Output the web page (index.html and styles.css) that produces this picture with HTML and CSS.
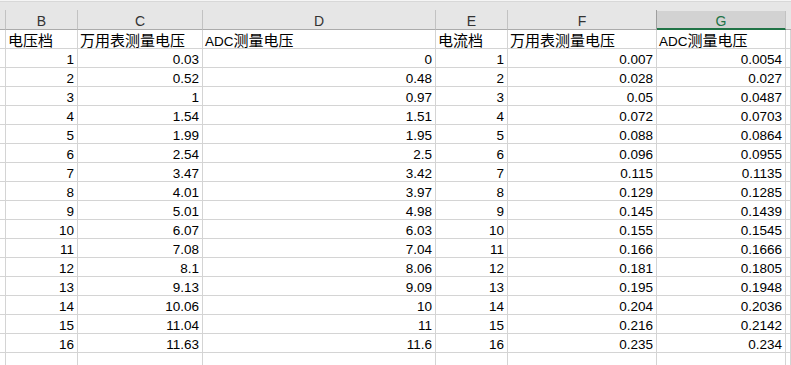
FILE: index.html
```html
<!DOCTYPE html>
<html lang="zh">
<head>
<meta charset="utf-8">
<title>Sheet</title>
<link rel="stylesheet" href="styles.css">
</head>
<body>
<div class="sheet">
  <div class="colhead">
    <div class="ch"></div>
    <div class="ch">B</div>
    <div class="ch">C</div>
    <div class="ch">D</div>
    <div class="ch">E</div>
    <div class="ch pre-sel">F</div>
    <div class="ch sel">G</div>
    <div class="ch last"></div>
  </div>
  <div class="grid">
    <div class="c"></div><div class="c t"><span class="cjk">电压档</span></div><div class="c t"><span class="cjk">万用表测量电压</span></div><div class="c t">ADC<span class="cjk">测量电压</span></div><div class="c t"><span class="cjk">电流档</span></div><div class="c t"><span class="cjk">万用表测量电压</span></div><div class="c t">ADC<span class="cjk">测量电压</span></div><div class="c"></div>
    <div class="c"></div><div class="c n">1</div><div class="c n">0.03</div><div class="c n">0</div><div class="c n">1</div><div class="c n">0.007</div><div class="c n">0.0054</div><div class="c"></div>
    <div class="c"></div><div class="c n">2</div><div class="c n">0.52</div><div class="c n">0.48</div><div class="c n">2</div><div class="c n">0.028</div><div class="c n">0.027</div><div class="c"></div>
    <div class="c"></div><div class="c n">3</div><div class="c n">1</div><div class="c n">0.97</div><div class="c n">3</div><div class="c n">0.05</div><div class="c n">0.0487</div><div class="c"></div>
    <div class="c"></div><div class="c n">4</div><div class="c n">1.54</div><div class="c n">1.51</div><div class="c n">4</div><div class="c n">0.072</div><div class="c n">0.0703</div><div class="c"></div>
    <div class="c"></div><div class="c n">5</div><div class="c n">1.99</div><div class="c n">1.95</div><div class="c n">5</div><div class="c n">0.088</div><div class="c n">0.0864</div><div class="c"></div>
    <div class="c"></div><div class="c n">6</div><div class="c n">2.54</div><div class="c n">2.5</div><div class="c n">6</div><div class="c n">0.096</div><div class="c n">0.0955</div><div class="c"></div>
    <div class="c"></div><div class="c n">7</div><div class="c n">3.47</div><div class="c n">3.42</div><div class="c n">7</div><div class="c n">0.115</div><div class="c n">0.1135</div><div class="c"></div>
    <div class="c"></div><div class="c n">8</div><div class="c n">4.01</div><div class="c n">3.97</div><div class="c n">8</div><div class="c n">0.129</div><div class="c n">0.1285</div><div class="c"></div>
    <div class="c"></div><div class="c n">9</div><div class="c n">5.01</div><div class="c n">4.98</div><div class="c n">9</div><div class="c n">0.145</div><div class="c n">0.1439</div><div class="c"></div>
    <div class="c"></div><div class="c n">10</div><div class="c n">6.07</div><div class="c n">6.03</div><div class="c n">10</div><div class="c n">0.155</div><div class="c n">0.1545</div><div class="c"></div>
    <div class="c"></div><div class="c n">11</div><div class="c n">7.08</div><div class="c n">7.04</div><div class="c n">11</div><div class="c n">0.166</div><div class="c n">0.1666</div><div class="c"></div>
    <div class="c"></div><div class="c n">12</div><div class="c n">8.1</div><div class="c n">8.06</div><div class="c n">12</div><div class="c n">0.181</div><div class="c n">0.1805</div><div class="c"></div>
    <div class="c"></div><div class="c n">13</div><div class="c n">9.13</div><div class="c n">9.09</div><div class="c n">13</div><div class="c n">0.195</div><div class="c n">0.1948</div><div class="c"></div>
    <div class="c"></div><div class="c n">14</div><div class="c n">10.06</div><div class="c n">10</div><div class="c n">14</div><div class="c n">0.204</div><div class="c n">0.2036</div><div class="c"></div>
    <div class="c"></div><div class="c n">15</div><div class="c n">11.04</div><div class="c n">11</div><div class="c n">15</div><div class="c n">0.216</div><div class="c n">0.2142</div><div class="c"></div>
    <div class="c"></div><div class="c n">16</div><div class="c n">11.63</div><div class="c n">11.6</div><div class="c n">16</div><div class="c n">0.235</div><div class="c n">0.234</div><div class="c"></div>
    <div class="c"></div><div class="c"></div><div class="c"></div><div class="c"></div><div class="c"></div><div class="c"></div><div class="c"></div><div class="c"></div>
  </div>
</div>
</body>
</html>
```

FILE: styles.css
```css
html, body {
  margin: 0;
  padding: 0;
  background: #ffffff;
  overflow: hidden;
}

.sheet {
  width: 791px;
  height: 365px;
  overflow: hidden;
  font-family: "Liberation Sans", "Noto Sans CJK SC", sans-serif;
  color: #000;
}

.colhead,
.grid {
  display: grid;
  grid-template-columns: 6px 72px 125px 233px 72px 149px 129px 1fr;
}

.colhead {
  height: 30px;
  background: linear-gradient(#f5f5f5 0 1px, #d8d8d8 1px 2px, #e6e6e6 2px);
}

.ch {
  box-sizing: border-box;
  margin-top: 10px;
  height: 20px;
  padding-top: 3px;
  line-height: 16px;
  font-size: 14px;
  text-align: center;
  color: #333;
  border-right: 1px solid #c2c2c2;
  border-bottom: 1px solid #ababab;
}

.ch.pre-sel {
  border-right-color: #9e9e9e;
}

.ch.sel {
  margin-top: 11px;
  height: 19px;
  padding-top: 2px;
  background: #d2d2d2;
  color: #217346;
  border-bottom: 2px solid #217346;
}

.ch.last {
  border-right: none;
}

.grid {
  grid-auto-rows: 19px;
}

.c {
  box-sizing: border-box;
  height: 19px;
  padding: 3px 2px 0 2px;
  line-height: 15px;
  font-size: 13.5px;
  white-space: nowrap;
  border-right: 1px solid #d4d4d4;
  border-bottom: 1px solid #d4d4d4;
}

.c.n {
  text-align: right;
  padding-right: 3px;
}

.c.t {
  text-align: left;
  padding-top: 1px;
  line-height: 17px;
}

.cjk {
  font-family: "Noto Sans CJK SC", sans-serif;
  font-size: 15px;
  line-height: 17px;
}
```
